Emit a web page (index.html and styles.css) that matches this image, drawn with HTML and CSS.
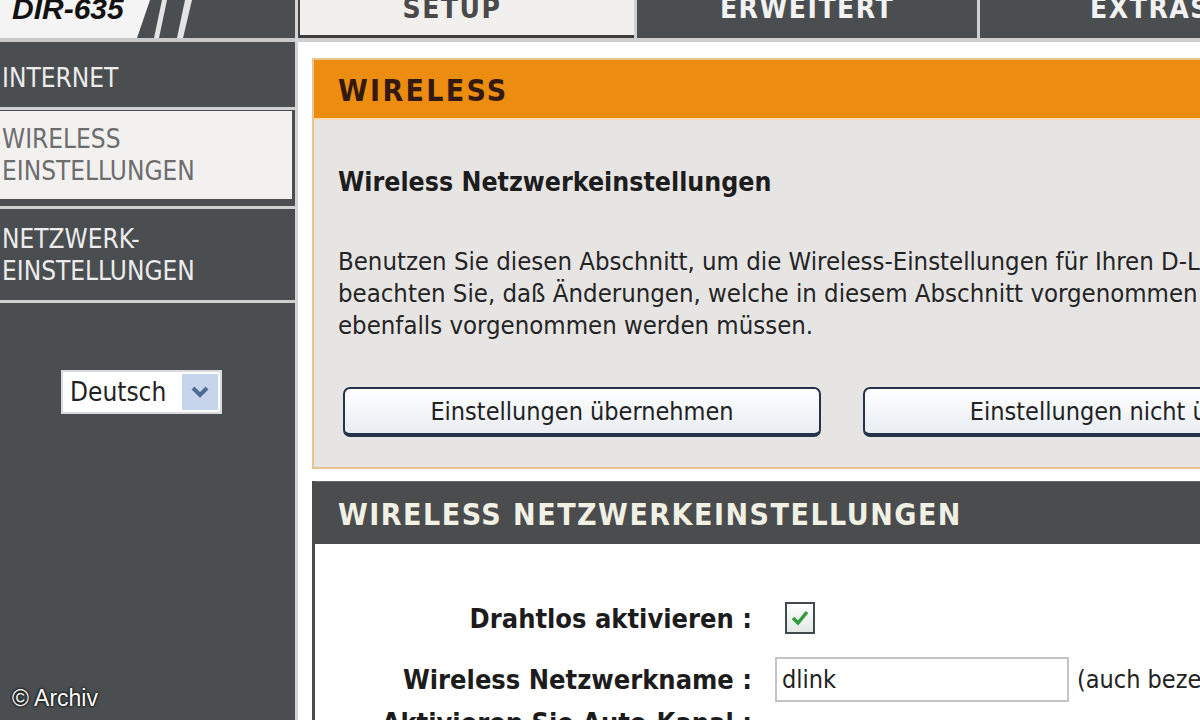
FILE: index.html
```html
<html>
  <head>
    <meta charset="utf-8">
    <title>DIR-635 Setup</title>
    <link rel="stylesheet" href="styles.css">
  </head>
  <body>
    <div class="page">

      <aside class="side">
        <div class="logo">
          <span class="model">DIR-635</span>
          <svg class="stripes" width="60" height="38" viewBox="0 0 60 38">
            <polygon points="12,0 17,0 9,38 4,38" fill="#e4e4e4"/>
            <polygon points="35,0 42,0 33,38 27,38" fill="#e4e4e4"/>
          </svg>
        </div>
        <div class="nav-item first">INTERNET</div>
        <div class="nav-item active"><div class="nav-in">WIRELESS<br>EINSTELLUNGEN</div></div>
        <div class="nav-item tall">NETZWERK-<br>EINSTELLUNGEN</div>

        <div class="lang">
          <span class="lang-text">Deutsch</span>
          <span class="lang-drop">
            <svg width="20" height="14" viewBox="0 0 20 14"><path d="M3 3 L10 10 L17 3" fill="none" stroke="#4f6a94" stroke-width="4"/></svg>
          </span>
        </div>
      </aside>

      <main class="main">
        <nav class="tabs">
          <div class="tab current">SETUP</div>
          <div class="tab">ERWEITERT</div>
          <div class="tab">EXTRAS</div>
        </nav>

        <section class="box orange">
          <h2 class="box-head">WIRELESS</h2>
          <div class="box-body">
            <h3>Wireless Netzwerkeinstellungen</h3>
            <p class="intro">Benutzen Sie diesen Abschnitt, um die Wireless-Einstellungen für Ihren D-Link Router zu konfigurieren. Bitte<br>beachten Sie, daß Änderungen, welche in diesem Abschnitt vorgenommen werden, auch auf Ihrem Wireless-Client<br>ebenfalls vorgenommen werden müssen.</p>
            <div class="buttons">
              <button class="btn">Einstellungen übernehmen</button>
              <button class="btn wide">Einstellungen nicht übernehmen</button>
            </div>
          </div>
        </section>

        <section class="box dark">
          <h2 class="box-head">WIRELESS NETZWERKEINSTELLUNGEN</h2>
          <div class="form">
            <div class="row">
              <label class="label">Drahtlos aktivieren :</label>
              <span class="check">
                <svg width="22" height="20" viewBox="0 0 22 20"><path d="M4 10 L9 15 L18 4" fill="none" stroke="#2f9a3a" stroke-width="3.5"/></svg>
              </span>
            </div>
            <div class="row name">
              <label class="label">Wireless Netzwerkname :</label>
              <span class="field">dlink</span>
              <span class="hint">(auch bezeichnet als SSID)</span>
            </div>
            <div class="row last">
              <label class="label">Aktivieren Sie Auto-Kanal :</label>
            </div>
          </div>
        </section>
      </main>

    </div>

    <div class="credit">© Archiv</div>
  </body>
</html>
```

FILE: styles.css
```css
body {
  margin: 0;
  width: 1200px;
  height: 720px;
  overflow: hidden;
  background: #fff;
  font-family: "DejaVu Sans Condensed", "DejaVu Sans", sans-serif;
  font-stretch: condensed;
  color: #222;
}

.page {
  display: flex;
  height: 720px;
}

/* left column */

.side {
  width: 295px;
  flex: none;
  background: #4b4e51;
  border-right: 3px solid #d4d4d4;
}

.logo {
  display: flex;
  height: 38px;
  border-bottom: 4px solid #c9c9c9;
  overflow: hidden;
}

.model {
  width: 150px;
  height: 38px;
  padding-left: 12px;
  box-sizing: border-box;
  background: #f4f4f4;
  clip-path: polygon(0 0, 150px 0, 137px 100%, 0 100%);
  font-family: "Liberation Sans", Arial, sans-serif;
  font-style: italic;
  font-weight: bold;
  font-size: 30px;
  line-height: 18px;
  color: #111;
}

.stripes {
  flex: none;
}

.nav-item {
  display: flex;
  align-items: center;
  height: 65px;
  padding-left: 2px;
  border-bottom: 3px solid #cfd0d0;
  font-size: 26px;
  line-height: 32px;
  color: #ececec;
}

.nav-item.first {
  height: 59px;
  padding-top: 6px;
}

.nav-item.tall {
  height: 91px;
}

.nav-item.active {
  height: 88px;
  padding: 1px 3px 7px 0;
}

.nav-in {
  flex: 1;
  height: 88px;
  display: flex;
  align-items: center;
  padding-left: 2px;
  background: #f2f1f0;
  color: #6d6d6d;
}

.lang {
  display: flex;
  align-items: center;
  width: 157px;
  height: 40px;
  margin: 67px 0 0 61px;
  background: #fff;
  border: 2px solid #d9dbe0;
}

.lang-text {
  flex: 1;
  padding-left: 7px;
  font-size: 26px;
  color: #222;
}

.lang-drop {
  display: flex;
  align-items: center;
  justify-content: center;
  width: 36px;
  height: 36px;
  margin-right: 2px;
  background: #c6d4ec;
}

/* main column */

.main {
  flex: 1;
  overflow: hidden;
}

.tabs {
  display: flex;
  gap: 3px;
  height: 38px;
  background: #d0d0d0;
  border-bottom: 4px solid #cfcfcf;
}

.tab {
  width: 340px;
  flex: none;
  text-align: center;
  background: #4b4e51;
  font-weight: bold;
  font-size: 28px;
  line-height: 18px;
  letter-spacing: 1.5px;
  color: #f2f2f2;
}

.tab.current {
  width: 336px;
  padding-right: 30px;
  box-sizing: border-box;
  background: #f2f0ee;
  border-left: 2px solid #444;
  border-bottom: 3px solid #3c3c3c;
  color: #4a4a4a;
}

.box {
  width: 960px;
  margin-left: 14px;
}

.box-head {
  margin: 0;
  padding-left: 24px;
  font-size: 30px;
  letter-spacing: 2.3px;
  font-weight: bold;
}

.orange {
  margin-top: 16px;
  border: 2px solid #e7c490;
  background: #e7e5e4;
}

.orange .box-head {
  height: 58px;
  line-height: 62px;
  background: #ec8c10;
  border-bottom: 2px solid #f6dcae;
  color: #341a0e;
}

.box-body {
  padding: 46px 24px 30px;
}

.box-body h3 {
  margin: 0;
  font-size: 26.5px;
  line-height: 32px;
  font-weight: bold;
  color: #1d1d1d;
}

.intro {
  margin: 47px 0 0;
  font-size: 25.5px;
  line-height: 32px;
  white-space: nowrap;
  color: #242424;
}

.buttons {
  display: flex;
  gap: 42px;
  margin: 46px 0 0 5px;
}

.btn {
  width: 478px;
  height: 50px;
  flex: none;
  border: 2px solid #25324a;
  border-bottom-width: 4px;
  border-radius: 7px;
  background: linear-gradient(#ffffff, #e8edf3);
  font-family: "DejaVu Sans Condensed", "DejaVu Sans", sans-serif;
  font-stretch: condensed;
  font-size: 25px;
  color: #222;
}

.btn.wide {
  width: 580px;
}

.dark {
  margin-top: 12px;
  border-left: 3px solid #4a4c4e;
  height: 300px;
}

.dark .box-head {
  height: 63px;
  line-height: 66px;
  padding-left: 23px;
  background: #4a4c4e;
  border-top: 1px solid #6a6c6e;
  box-sizing: border-box;
  letter-spacing: 1.5px;
  color: #f1f0e4;
}

.form {
  padding-top: 52px;
}

.row {
  display: flex;
  align-items: center;
  height: 44px;
}

.row.name {
  height: 50px;
  margin-top: 14px;
}

.row.last {
  height: 32px;
  margin-top: 2px;
}

.label {
  width: 437px;
  flex: none;
  text-align: right;
  font-size: 27px;
  font-weight: bold;
  color: #1c1c1c;
}

.check {
  display: flex;
  align-items: center;
  justify-content: center;
  width: 26px;
  height: 28px;
  margin-left: 33px;
  border: 2px solid #3e4a4e;
  background: linear-gradient(#ffffff, #e2e8e6);
}

.field {
  width: 285px;
  height: 41px;
  flex: none;
  margin-left: 23px;
  padding-left: 5px;
  border: 2px solid #c4c4c4;
  font-size: 25px;
  line-height: 41px;
  color: #222;
}

.hint {
  margin-left: 8px;
  white-space: nowrap;
  font-size: 25px;
  color: #222;
}

.credit {
  position: absolute;
  left: 12px;
  bottom: 8px;
  font-family: "Liberation Sans", Arial, sans-serif;
  font-size: 23px;
  color: #fff;
  text-shadow: 0 0 3px #000, 0 0 2px #000;
}
```
